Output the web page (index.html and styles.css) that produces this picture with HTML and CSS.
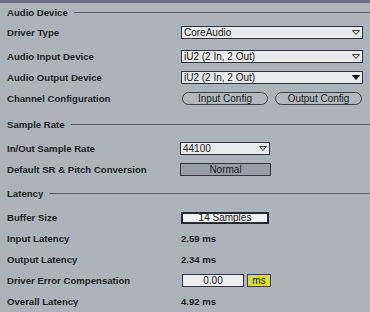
FILE: index.html
```html
<!DOCTYPE html>
<html lang="en">
<head>
    <meta charset="UTF-8">
    <meta name="viewport" content="width=device-width, initial-scale=1.0">
    <title>Audio Preferences</title>
    <link rel="stylesheet" href="styles.css">
</head>
<body>
    <div class="topbar"></div>

    <div class="section first">
        <div class="heading"><span>Audio Device</span><span class="rule"></span></div>
        <div class="row">
            <span class="label">Driver Type</span>
            <div class="select wide">CoreAudio
                <svg class="arrow" width="8" height="5" viewBox="0 0 8 5"><polygon points="0.5,0.5 7.5,0.5 4,4.5" fill="#dfe2e5" stroke="#3a4046"/></svg>
            </div>
        </div>
        <div class="row spaced">
            <span class="label">Audio Input Device</span>
            <div class="select wide">iU2 (2 In, 2 Out)
                <svg class="arrow" width="8" height="5" viewBox="0 0 8 5"><polygon points="0.5,0.5 7.5,0.5 4,4.5" fill="#dfe2e5" stroke="#3a4046"/></svg>
            </div>
        </div>
        <div class="row">
            <span class="label">Audio Output Device</span>
            <div class="select wide">iU2 (2 In, 2 Out)
                <svg class="arrow" width="8" height="5" viewBox="0 0 8 5"><polygon points="0.5,0.5 7.5,0.5 4,4.5" fill="#111" stroke="#111"/></svg>
            </div>
        </div>
        <div class="row">
            <span class="label">Channel Configuration</span>
            <div class="pills">
                <button class="pill">Input Config</button>
                <button class="pill">Output Config</button>
            </div>
        </div>
    </div>

    <div class="section">
        <div class="heading"><span>Sample Rate</span><span class="rule"></span></div>
        <div class="row">
            <span class="label">In/Out Sample Rate</span>
            <div class="select narrow">44100
                <svg class="arrow" width="8" height="5" viewBox="0 0 8 5"><polygon points="0.5,0.5 7.5,0.5 4,4.5" fill="#dfe2e5" stroke="#3a4046"/></svg>
            </div>
        </div>
        <div class="row">
            <span class="label">Default SR &amp; Pitch Conversion</span>
            <div class="toggle">Normal</div>
        </div>
    </div>

    <div class="section">
        <div class="heading"><span>Latency</span><span class="rule"></span></div>
        <div class="row">
            <span class="label">Buffer Size</span>
            <div class="buffer">14 Samples</div>
        </div>
        <div class="row">
            <span class="label">Input Latency</span>
            <span class="value">2.59 ms</span>
        </div>
        <div class="row">
            <span class="label">Output Latency</span>
            <span class="value">2.34 ms</span>
        </div>
        <div class="row">
            <span class="label">Driver Error Compensation</span>
            <div class="number">0.00</div>
            <div class="unit">ms</div>
        </div>
        <div class="row">
            <span class="label">Overall Latency</span>
            <span class="value">4.92 ms</span>
        </div>
    </div>
</body>
</html>
```

FILE: styles.css
```css
/* General styles */
body {
    margin: 0;
    width: 370px;
    height: 312px;
    overflow: hidden;
    background-color: #adb3ba;
    color: #1c1f23;
    font-family: "Liberation Sans", Arial, sans-serif;
}

.topbar {
    height: 3px;
    background-color: #687081;
}

/* Sections */
.section {
    margin-top: 8px;
}

.section.first {
    margin-top: 0;
    padding-top: 2px;
}

.section:last-child {
    margin-top: 6px;
}

.heading {
    display: flex;
    align-items: center;
    height: 14px;
    padding-left: 7px;
    font-size: 9.6px;
    font-weight: bold;
    margin-bottom: 7px;
}

.section.first .heading {
    margin-bottom: 3px;
}

.heading .rule {
    flex: 1;
    height: 1px;
    margin-left: 6px;
    background-color: #56606b;
}

/* Rows */
.row {
    display: flex;
    align-items: center;
    height: 21px;
}

.row.spaced {
    margin-top: 3px;
}

.label {
    width: 174px;
    padding-left: 7px;
    font-size: 9.6px;
    font-weight: bold;
    flex-shrink: 0;
}

.value {
    font-size: 9.6px;
    font-weight: bold;
}

/* Controls */
.select {
    position: relative;
    box-sizing: border-box;
    height: 13px;
    padding-left: 2px;
    background-color: #e9eaec;
    border: 1px solid #30353b;
    font-size: 10px;
    line-height: 11px;
    color: #1a1a1a;
}

.select.wide {
    width: 182px;
}

.select.narrow {
    width: 90px;
    margin-left: -1px;
}

.arrow {
    position: absolute;
    right: 2px;
    top: 3px;
}

.pills {
    display: flex;
    gap: 7px;
}

.pill {
    box-sizing: border-box;
    width: 87px;
    height: 13px;
    padding: 0;
    background-color: #b2b8be;
    border: 1px solid #3a4046;
    border-radius: 7px;
    font-family: "Liberation Sans", Arial, sans-serif;
    font-size: 10px;
    line-height: 11px;
    color: #1a1a1a;
}

.pill:first-child {
    width: 86px;
    margin-left: 1px;
}

.toggle {
    box-sizing: border-box;
    width: 91px;
    height: 13px;
    margin-left: -1px;
    background-color: #959ea7;
    border: 1px solid #30353b;
    text-align: center;
    font-size: 10px;
    line-height: 11px;
    color: #1a1a1a;
}

.buffer {
    box-sizing: border-box;
    width: 88px;
    height: 12px;
    background-color: #eef0f2;
    border: 2px solid #262a2f;
    text-align: center;
    font-size: 10px;
    line-height: 8px;
    color: #1a1a1a;
}

.number {
    box-sizing: border-box;
    width: 62px;
    height: 13px;
    margin-left: 1px;
    background-color: #ebedef;
    border: 1px solid #30353b;
    text-align: center;
    font-size: 10px;
    line-height: 11px;
    color: #1a1a1a;
}

.unit {
    box-sizing: border-box;
    width: 24px;
    height: 13px;
    margin-left: 3px;
    background-color: #d9e21b;
    border: 1px solid #3a4046;
    text-align: center;
    font-size: 10px;
    line-height: 11px;
    color: #1a1a1a;
}
```
